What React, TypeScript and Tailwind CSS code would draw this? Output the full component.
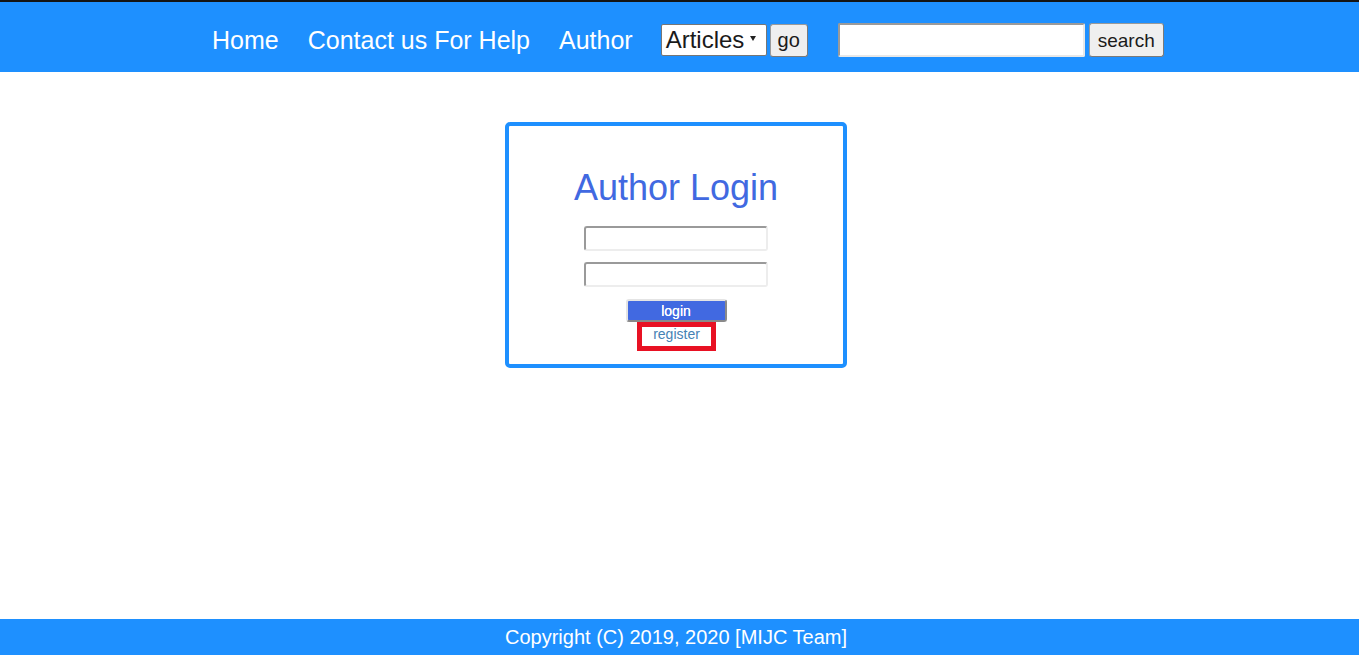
import React from "react";

export default function App() {
  const font = { fontFamily: '"Liberation Sans", Arial, sans-serif' };
  return (
    <div className="flex h-screen flex-col bg-white" style={font}>
      <header className="flex h-[72px] shrink-0 items-center border-t-2 border-[#141414] bg-[#1e90ff] pl-[212px] pt-[6px]">
        <nav className="flex items-center gap-[29px] text-[25px] leading-none text-white">
          <a href="#">Home</a>
          <a href="#">Contact us For Help</a>
          <a href="#">Author</a>
        </nav>
        <div className="ml-[28px] flex items-center">
          <div className="flex h-[32px] w-[106px] items-center rounded-[2px] border border-[#767676] bg-white pl-[4px] text-[24px] leading-none text-[#1a1a1a]">
            <span>Articles</span>
            <svg width="6" height="5" viewBox="0 0 6 5" className="ml-[6px] mb-[3px]">
              <path d="M0 0 L6 0 L3 5 Z" fill="#222" />
            </svg>
          </div>
          <button className="ml-[3px] flex h-[33px] w-[38px] items-center justify-center rounded-[3px] border border-[#9a9a9a] border-b-[#7a7a7a] border-r-[#7a7a7a] bg-[#efefef] text-[20px] leading-none text-[#1a1a1a]">
            go
          </button>
        </div>
        <div className="ml-[30px] flex items-center">
          <input
            type="text"
            className="h-[34px] w-[247px] rounded-[2px] border-2 border-[#9a9a9a] border-b-[#e8e8e8] border-r-[#e8e8e8] bg-white outline-none"
          />
          <button className="ml-[4px] flex h-[34px] w-[75px] items-center justify-center rounded-[3px] border border-[#9a9a9a] border-b-[#7a7a7a] border-r-[#7a7a7a] bg-[#efefef] text-[19px] leading-none text-[#1a1a1a]">
            search
          </button>
        </div>
      </header>

      <main className="flex flex-1 justify-center pr-[7px] pt-[50px]">
        <div className="flex h-[246px] w-[342px] flex-col items-center rounded-[5px] border-4 border-[#1e90ff] pt-[41px]">
          <h1 className="text-[36px] leading-[41px] text-[#4169e1]">Author Login</h1>
          <input
            type="text"
            className="mt-[18px] h-[25px] w-[184px] rounded-[3px] border-2 border-[#9a9a9a] border-b-[#ededed] border-r-[#ededed] bg-white outline-none"
          />
          <input
            type="password"
            className="mt-[11px] h-[25px] w-[184px] rounded-[3px] border-2 border-[#9a9a9a] border-b-[#ededed] border-r-[#ededed] bg-white outline-none"
          />
          <button className="mt-[12px] flex h-[23px] w-[101px] items-center justify-center rounded-[3px] border-2 border-[#e4e4e4] border-b-[#8a8a8a] border-r-[#8a8a8a] bg-[#4169e1] text-[14px] font-medium leading-none text-white [text-shadow:0_0_0.4px_#fff]">
            login
          </button>
          <a
            href="#"
            className="ml-[1px] flex h-[29px] w-[79px] items-start justify-center border-[5px] border-[#e81123] text-[14px] leading-[14px] text-[#4682b4]"
          >
            register
          </a>
        </div>
      </main>

      <footer className="flex h-[36px] shrink-0 items-center justify-center bg-[#1e90ff] pr-[7px] text-[20px] leading-none text-white">
        Copyright (C) 2019, 2020 [MIJC Team]
      </footer>
    </div>
  );
}
